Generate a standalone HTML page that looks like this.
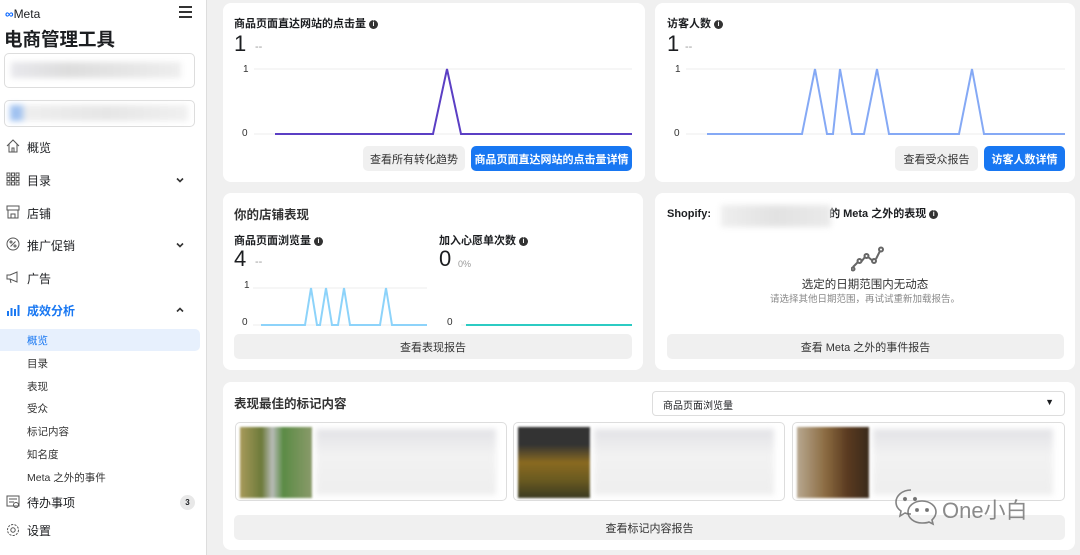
<!DOCTYPE html>
<html><head><meta charset="utf-8"><style>
*{margin:0;padding:0;box-sizing:border-box}
body{width:1080px;height:555px;overflow:hidden;background:#f0f0f0;font-family:"Liberation Sans","Noto Sans CJK SC",sans-serif;color:#1c1e21;position:relative}
.a{position:absolute}
.side{left:0;top:0;width:207px;height:555px;background:#fff;border-right:1px solid #ddd}
.card{background:#fff;border-radius:8px;position:absolute}
.t{font-size:11px;font-weight:bold;color:#1c1e21}
.btn{position:absolute;height:25px;border-radius:5px;background:#f0f0f0;font-size:11px;display:flex;align-items:center;justify-content:center;color:#333}
.blue{background:#1877f2;color:#fff;font-weight:bold}
.nav{position:absolute;left:27px;font-size:12px;color:#1c1e21}
.sub{position:absolute;left:27px;font-size:10.5px;color:#333}
.ico{position:absolute;left:6px;width:14px;height:14px}
.chev{position:absolute;left:175px;width:10px;height:10px}
.info{display:inline-block;width:9px;height:9px;border-radius:50%;background:#333;color:#fff;font-size:7px;line-height:9px;text-align:center;vertical-align:middle;margin-left:3px}
.blur{filter:blur(3px)}
.lab{position:absolute;font-size:10px;color:#333}
</style></head><body>
<div class="a side">
 <div class="a" style="left:5px;top:7px;font-size:12px;color:#1c1e21"><span style="color:#0866ff;font-weight:bold">∞</span>Meta</div>
 <div class="a" style="left:179px;top:6px;width:13px;height:12px;border-top:2px solid #333;border-bottom:2px solid #333"><div style="margin-top:3px;border-top:2px solid #333"></div></div>
 <div class="a" style="left:4px;top:26px;font-size:18.5px;font-weight:bold">电商管理工具</div>
 <div class="a" style="left:4px;top:53px;width:191px;height:35px;border:1px solid #ddd;border-radius:5px"><div class="blur" style="margin:8px 6px;height:16px;width:170px;background:linear-gradient(90deg,#e8e8ec,#ddd,#e5e5e5,#eee)"></div></div>
 <div class="a" style="left:4px;top:100px;width:191px;height:27px;border:1px solid #ddd;border-radius:5px"><div class="blur" style="margin:4px 5px;height:16px;width:178px;background:linear-gradient(90deg,#9fc1f0 0 10px,#eee 16px,#e6e6e6,#f0f0f0)"></div></div>
 <svg class="ico" style="top:139px" viewBox="0 0 14 14" fill="none" stroke="#555"><path d="M1 7L7 1l6 6M3 5v8h8V5M6 13V9h2v4"/></svg><div class="nav" style="top:139px">概览</div>
 <svg class="ico" style="top:172px" viewBox="0 0 14 14" fill="none" stroke="#555"><path d="M1 1h3v3H1zM5.5 1h3v3h-3zM10 1h3v3h-3zM1 5.5h3v3H1zM5.5 5.5h3v3h-3zM10 5.5h3v3h-3zM1 10h3v3H1zM5.5 10h3v3h-3zM10 10h3v3h-3z"/></svg><div class="nav" style="top:172px">目录</div>
 <svg class="chev" style="top:175px" viewBox="0 0 10 10" fill="none" stroke="#333" stroke-width="1.6"><path d="M2 3.5l3 3 3-3"/></svg>
 <svg class="ico" style="top:205px" viewBox="0 0 14 14" fill="none" stroke="#555"><path d="M1 1h12v4H1zM2 5v8h10V5M5 13V9h4v4"/></svg><div class="nav" style="top:205px">店铺</div>
 <svg class="ico" style="top:237px" viewBox="0 0 14 14" fill="none" stroke="#555"><circle cx="7" cy="7" r="6"/><path d="M4.5 9.5l5-5"/><circle cx="5" cy="5" r="1"/><circle cx="9" cy="9" r="1"/></svg><div class="nav" style="top:237px">推广促销</div>
 <svg class="chev" style="top:240px" viewBox="0 0 10 10" fill="none" stroke="#333" stroke-width="1.6"><path d="M2 3.5l3 3 3-3"/></svg>
 <svg class="ico" style="top:270px" viewBox="0 0 14 14" fill="none" stroke="#555"><path d="M1 5h3l7-3v10L4 9H1zM4 9l1 4"/></svg><div class="nav" style="top:270px">广告</div>
 <svg class="ico" style="top:303px" viewBox="0 0 14 14" fill="#1877f2"><rect x="1" y="8" width="2" height="5"/><rect x="4.5" y="5" width="2" height="8"/><rect x="8" y="6" width="2" height="7"/><rect x="11.5" y="2" width="2" height="11"/></svg><div class="nav" style="top:302px;color:#1877f2;font-weight:bold">成效分析</div>
 <svg class="chev" style="top:305px" viewBox="0 0 10 10" fill="none" stroke="#333" stroke-width="1.6"><path d="M2 6.5l3-3 3 3"/></svg>
 <div class="a" style="left:0;top:329px;width:200px;height:22px;background:#e7f0fd;border-radius:0 5px 5px 0"></div>
 <div class="sub" style="top:333px;color:#1877f2">概览</div>
 <div class="sub" style="top:356px">目录</div>
 <div class="sub" style="top:379px">表现</div>
 <div class="sub" style="top:401px">受众</div>
 <div class="sub" style="top:424px">标记内容</div>
 <div class="sub" style="top:447px">知名度</div>
 <div class="sub" style="top:470px">Meta 之外的事件</div>
 <svg class="ico" style="top:495px" viewBox="0 0 14 14" fill="none" stroke="#555"><path d="M1 1h12v10H1zM3 4h8M3 7h5"/><circle cx="10" cy="10" r="2.5"/></svg><div class="nav" style="top:494px">待办事项</div>
 <div class="a" style="left:180px;top:495px;width:15px;height:15px;border-radius:50%;background:#e8e8e8;font-size:8px;text-align:center;line-height:15px;font-weight:bold">3</div>
 <svg class="ico" style="top:523px" viewBox="0 0 14 14" fill="none" stroke="#555"><circle cx="7" cy="7" r="2.2"/><circle cx="7" cy="7" r="5.5" stroke-dasharray="2.2 1.2"/></svg><div class="nav" style="top:522px">设置</div>
</div>

<div class="card" style="left:223px;top:3px;width:422px;height:179px">
 <div class="a t" style="left:11px;top:12px">商品页面直达网站的点击量<span class="info">i</span></div>
 <div class="a" style="left:11px;top:28px;font-size:22px">1</div><div class="a" style="left:32px;top:38px;font-size:11px;color:#999">--</div>
 <div class="lab" style="left:20px;top:61px">1</div><div class="lab" style="left:19px;top:125px">0</div>
 <svg class="a" style="left:0;top:0" width="422" height="179"><line x1="31" y1="66" x2="409" y2="66" stroke="#eee"/><line x1="31" y1="131" x2="409" y2="131" stroke="#eee"/><polyline points="52,131 210,131 224,66 238,131 409,131" fill="none" stroke="#5b3fc4" stroke-width="2"/></svg>
 <div class="btn" style="left:140px;top:143px;width:102px">查看所有转化趋势</div>
 <div class="btn blue" style="left:248px;top:143px;width:161px">商品页面直达网站的点击量详情</div>
</div>
<div class="card" style="left:655px;top:3px;width:420px;height:179px">
 <div class="a t" style="left:12px;top:12px">访客人数<span class="info">i</span></div>
 <div class="a" style="left:12px;top:28px;font-size:22px">1</div><div class="a" style="left:30px;top:38px;font-size:11px;color:#999">--</div>
 <div class="lab" style="left:20px;top:61px">1</div><div class="lab" style="left:19px;top:125px">0</div>
 <svg class="a" style="left:0;top:0" width="420" height="179"><line x1="31" y1="66" x2="410" y2="66" stroke="#eee"/><line x1="31" y1="131" x2="410" y2="131" stroke="#eee"/><polyline points="52,131 147,131 160,66 172,131 178,131 185,66 197,131 209,131 222,66 234,131 304,131 317,66 329,131 410,131" fill="none" stroke="#85a9f5" stroke-width="2"/></svg>
 <div class="btn" style="left:240px;top:143px;width:83px">查看受众报告</div>
 <div class="btn blue" style="left:329px;top:143px;width:81px">访客人数详情</div>
</div>
<div class="card" style="left:223px;top:193px;width:420px;height:177px">
 <div class="a" style="left:11px;top:11px;font-size:12.5px;font-weight:bold;color:#333">你的店铺表现</div>
 <div class="a t" style="left:11px;top:39px">商品页面浏览量<span class="info">i</span></div>
 <div class="a t" style="left:216px;top:39px">加入心愿单次数<span class="info">i</span></div>
 <div class="a" style="left:11px;top:53px;font-size:22px">4</div><div class="a" style="left:32px;top:63px;font-size:11px;color:#999">--</div>
 <div class="a" style="left:216px;top:53px;font-size:22px">0</div><div class="a" style="left:235px;top:66px;font-size:9px;color:#999">0%</div>
 <div class="lab" style="left:21px;top:87px">1</div><div class="lab" style="left:19px;top:124px">0</div><div class="lab" style="left:224px;top:124px">0</div>
 <svg class="a" style="left:0;top:0" width="420" height="177"><line x1="30" y1="95" x2="204" y2="95" stroke="#eee"/><line x1="30" y1="132" x2="204" y2="132" stroke="#eee"/><line x1="238" y1="132" x2="409" y2="132" stroke="#eee"/><polyline points="38,132 82,132 88,95 94,132 97,132 103,95 109,132 115,132 121,95 127,132 157,132 163,95 169,132 204,132" fill="none" stroke="#8dd3fa" stroke-width="2"/><line x1="243" y1="132" x2="409" y2="132" stroke="#2ccbc3" stroke-width="2"/></svg>
 <div class="btn" style="left:11px;top:141px;width:398px">查看表现报告</div>
</div>
<div class="card" style="left:655px;top:193px;width:420px;height:177px">
 <div class="a t" style="left:12px;top:12px">Shopify: <span style="display:inline-block;width:115px"></span>的 Meta 之外的表现<span class="info">i</span></div>
 <div class="a blur" style="left:66px;top:12px;width:110px;height:22px;background:linear-gradient(90deg,#eee,#e2e2e2,#eaeaea)"></div>
 <svg class="a" style="left:196px;top:53px" width="34" height="30" fill="none" stroke="#666" stroke-width="2"><path d="M2 21l5-5M10 16l4-5M17 11l5 4M25 13l4-8"/><circle cx="8.5" cy="15" r="2"/><circle cx="15.5" cy="10" r="2"/><circle cx="23" cy="15" r="2"/><circle cx="30" cy="3.5" r="2"/><circle cx="2" cy="23" r="1.5"/></svg>
 <div class="a" style="left:0;width:420px;top:83px;text-align:center;font-size:11.5px;color:#333">选定的日期范围内无动态</div>
 <div class="a" style="left:0;width:420px;top:98px;text-align:center;font-size:9.5px;color:#888">请选择其他日期范围，再试试重新加载报告。</div>
 <div class="btn" style="left:12px;top:141px;width:397px">查看 Meta 之外的事件报告</div>
</div>
<div class="card" style="left:223px;top:382px;width:852px;height:168px">
 <div class="a" style="left:11px;top:11px;font-size:12.5px;font-weight:bold;color:#333">表现最佳的标记内容</div>
 <div class="a" style="left:429px;top:9px;width:413px;height:25px;border:1px solid #ddd;border-radius:4px;font-size:10px;padding:5px 10px">商品页面浏览量<span style="position:absolute;right:10px;top:5px;font-size:9px">▼</span></div>
 <div class="a" style="left:12px;top:40px;width:272px;height:79px;border:1px solid #ddd;border-radius:5px;overflow:hidden">
  <div class="a" style="left:4px;top:4px;width:72px;height:71px;background:linear-gradient(90deg,#a89a5a,#6c7a3a 30%,#b8bcb8 45%,#5b8b45 60%,#8a9a6a);filter:blur(1px)"></div>
  <div class="a blur" style="left:80px;top:6px;width:180px;height:66px;background:linear-gradient(#e2e2e6,#f2f2f2 40%,#eee)"></div></div>
 <div class="a" style="left:290px;top:40px;width:272px;height:79px;border:1px solid #ddd;border-radius:5px;overflow:hidden">
  <div class="a" style="left:4px;top:4px;width:72px;height:71px;background:linear-gradient(#333 25%,#8a6a20 50%,#6a5a20 75%,#3a3a20);filter:blur(1px)"></div>
  <div class="a blur" style="left:80px;top:6px;width:180px;height:66px;background:linear-gradient(#e2e2e6,#f2f2f2 40%,#eee)"></div></div>
 <div class="a" style="left:569px;top:40px;width:273px;height:79px;border:1px solid #ddd;border-radius:5px;overflow:hidden">
  <div class="a" style="left:4px;top:4px;width:72px;height:71px;background:linear-gradient(90deg,#b8a890,#8a6a40 40%,#5a3a20 70%,#3a2a1a);filter:blur(1px)"></div>
  <div class="a blur" style="left:80px;top:6px;width:180px;height:66px;background:linear-gradient(#e2e2e6,#f2f2f2 40%,#eee)"></div></div>
 <div class="btn" style="left:11px;top:133px;width:831px">查看标记内容报告</div>
</div>
<svg class="a" style="left:893px;top:487px" width="46" height="40" fill="none" stroke="rgba(110,110,110,.85)" stroke-width="1.6"><path d="M18 3C9 3 3 9 3 15c0 4 2 7 5 9l-1 5 5-3c2 1 4 1 6 1"/><path d="M29 14c8 0 14 5 14 11 0 3-2 6-4 8l1 4-4-2c-2 1-4 1-7 1-8 0-14-5-14-11s6-11 14-11z"/><circle cx="12" cy="12" r="1.3" fill="#777"/><circle cx="22" cy="12" r="1.3" fill="#777"/><circle cx="24" cy="23" r="1.2" fill="#777"/><circle cx="34" cy="23" r="1.2" fill="#777"/></svg>
<div class="a" style="left:942px;top:493px;font-size:22px;color:rgba(110,110,110,.8)">One小白</div>
</body></html>
